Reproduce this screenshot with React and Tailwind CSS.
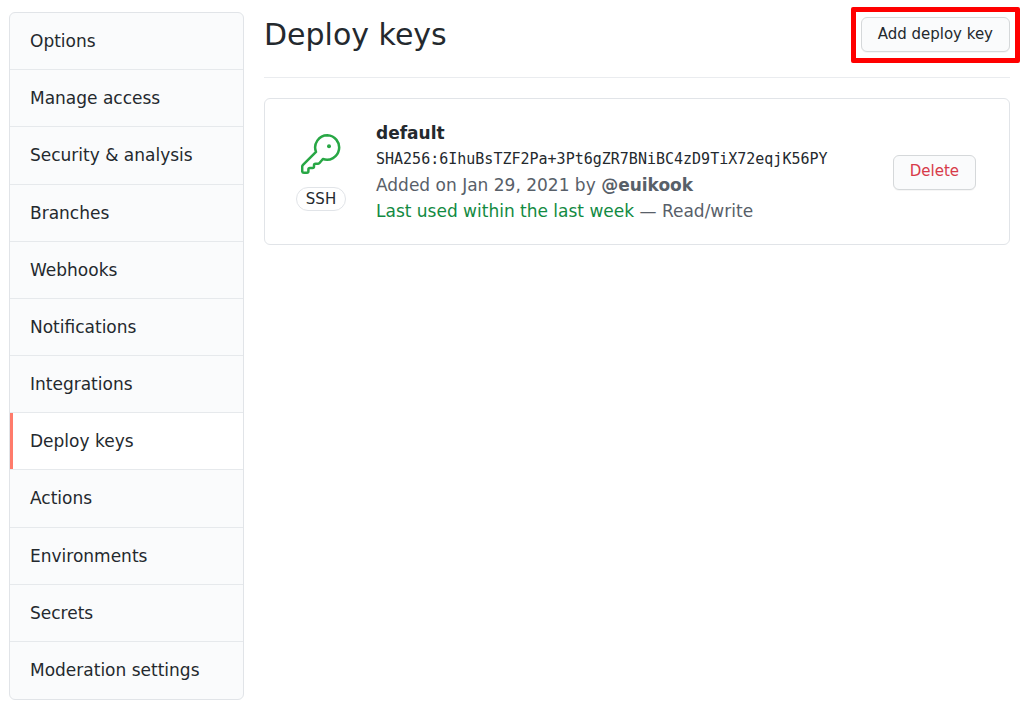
const items = [
  'Options', 'Manage access', 'Security & analysis', 'Branches', 'Webhooks', 'Notifications',
  'Integrations', 'Deploy keys', 'Actions', 'Environments', 'Secrets', 'Moderation settings',
];

function KeyIcon() {
  return (
    <svg viewBox="0 0 40 40" className="size-10 fill-none stroke-[#28a745]" aria-hidden="true">
      <path
        strokeWidth="2.5"
        strokeLinejoin="round"
        d="M26.4 1.3A12.2 12.2 0 0 0 15 17.9L2 30.9c-.5.5-.8 1.1-.8 1.8v4.2c0 1 .8 1.8 1.8 1.8h2.9c.9 0 1.5-.7 1.5-1.5v-1.6c0-.9.7-1.5 1.5-1.5h2.6c.9 0 1.5-.7 1.5-1.5v-1.3c0-.9.7-1.5 1.5-1.5h2.4c.6 0 1-.2 1.4-.6l3.6-4.2A12.2 12.2 0 1 0 26.4 1.3Z"
      />
      <circle cx="28" cy="12.3" r="2" className="fill-[#28a745] stroke-none" />
    </svg>
  );
}

export default function App() {
  return (
    <div className="flex min-h-screen items-stretch gap-5 bg-white pt-3 pr-[17px] pb-3 pl-[9px] font-['DejaVu_Sans',sans-serif] text-[#24292e]">
      <nav aria-label="Settings" className="flex w-[235px] shrink-0 flex-col overflow-hidden rounded-md border border-[#e1e4e8] bg-[#fafbfc]">
        <ul className="grid grow auto-rows-fr divide-y divide-[#e6e9ec]">
          {items.map((item) => (
            <li key={item} className="flex">
              <a
                href="#"
                aria-current={item === 'Deploy keys' ? 'page' : undefined}
                className="flex grow items-center border-[#ff7b6b] px-5 py-4 text-[17px] leading-6 aria-[current=page]:border-l-3 aria-[current=page]:bg-white aria-[current=page]:pl-[17px]"
              >
                {item}
              </a>
            </li>
          ))}
        </ul>
      </nav>
      <main className="min-w-0 grow">
        <header className="flex items-start justify-between border-b border-[#eaecef] pb-[14px]">
          <h1 className="text-[30px] leading-[46px]">Deploy keys</h1>
          <div className="-mt-[5px] -mr-[10px] rounded-[2px] border-5 border-[#ff0000] p-[5px] pb-[6px]">
            <button type="button" className="block h-[35px] rounded-md border border-[#d5d8da] bg-[#fafbfc] px-4 pb-[2px] text-[15px] leading-5 shadow-[0_1px_0_rgba(27,31,35,0.04)]">
              Add deploy key
            </button>
          </div>
        </header>
        <section className="mt-5 flex items-center rounded-md border border-[#e1e4e8] pt-[21px] pr-[33px] pb-5 pl-[31px]">
          <div className="flex w-[50px] flex-col items-center gap-[13px]">
            <KeyIcon />
            <span className="rounded-full border border-[#e1e4e8] px-[9px] text-[15px] leading-[22px]">SSH</span>
          </div>
          <div className="ml-[30px] min-w-0 grow text-[17px] leading-[26px] text-[#586069]">
            <strong className="block text-[#24292e]">default</strong>
            <code className="block font-['DejaVu_Sans_Mono',monospace] text-[15px] text-[#24292e]">SHA256:6IhuBsTZF2Pa+3Pt6gZR7BNiBC4zD9TiX72eqjK56PY</code>
            <p>Added on Jan 29, 2021 by <a href="#" className="font-bold">@euikook</a></p>
            <p><span className="text-[#128a42]">Last used within the last week</span> — Read/write</p>
          </div>
          <button type="button" className="h-[35px] shrink-0 rounded-md border border-[#d5d8da] bg-[#fafbfc] px-4 pb-[2px] text-[15px] leading-5 text-[#d73a49] shadow-[0_1px_0_rgba(27,31,35,0.04)]">
            Delete
          </button>
        </section>
      </main>
    </div>
  );
}
